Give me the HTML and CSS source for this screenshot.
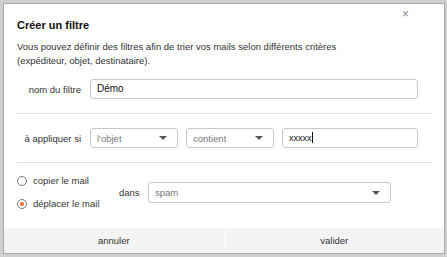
FILE: index.html
```html
<!DOCTYPE html>
<html lang="fr">
<head>
    <meta charset="UTF-8">
    <meta name="viewport" content="width=device-width, initial-scale=1.0">
    <title>Créer un filtre</title>
    <link rel="stylesheet" href="styles.css">
</head>
<body>
    <div class="dialog">
        <span class="close">&times;</span>
        <div class="content">
            <h2>Créer un filtre</h2>
            <p class="intro">Vous pouvez définir des filtres afin de trier vos mails selon différents critères<br>(expéditeur, objet, destinataire).</p>

            <div class="row">
                <label class="label">nom du filtre</label>
                <div class="field wide">Démo</div>
            </div>
            <div class="sep"></div>
            <div class="row">
                <label class="label">à appliquer si</label>
                <div class="select small"><span>l'objet</span><i class="caret"></i></div>
                <div class="select small"><span>contient</span><i class="caret"></i></div>
                <div class="field value">xxxxx<span class="cursor"></span></div>
            </div>
            <div class="sep"></div>
            <div class="action">
                <div class="radios">
                    <div class="radio"><span class="dot"></span>copier le mail</div>
                    <div class="radio"><span class="dot checked"></span>déplacer le mail</div>
                </div>
                <span class="dans">dans</span>
                <div class="select folder"><span>spam</span><i class="caret"></i></div>
            </div>
        </div>
        <div class="footer">
            <button class="btn">annuler</button>
            <button class="btn">valider</button>
        </div>
    </div>
</body>
</html>
```

FILE: styles.css
```css
* { margin: 0; padding: 0; box-sizing: border-box; }
body { font-family: "Liberation Sans", Arial, sans-serif; background: #cfcfcf; width: 447px; height: 257px; padding: 3px 2px 3px 3px; color: #333; font-size: 9.5px; }
.dialog { position: relative; width: 442px; height: 251px; background: white; border: 1px solid #a9a9a9; display: flex; flex-direction: column; }
.close { position: absolute; top: 3px; right: 35px; color: #8a8a8a; font-size: 12px; }
.content { flex: 1; padding: 14px 12px 0 13px; }
h2 { font-size: 11px; font-weight: bold; color: #111; line-height: 14px; }
.intro { margin-top: 8px; line-height: 14px; }
.row { display: flex; align-items: center; gap: 8px; margin-top: 11px; padding-right: 14px; }
.sep + .row { margin-top: 14px; }
.label { width: 64px; margin-right: 1px; text-align: right; }
.field { height: 20px; border: 1px solid #c8c8c8; border-radius: 3px; padding: 0 6px; line-height: 18px; color: #111; font-size: 10px; }
.wide { flex: 1; }
.value { flex: 1; font-size: 9px; }
.cursor { display: inline-block; width: 1px; height: 11px; background: #111; vertical-align: -2px; }
.select { height: 20px; border: 1px solid #c8c8c8; border-radius: 3px; padding: 0 6px; display: flex; align-items: center; justify-content: space-between; color: #777; }
.small { width: 88px; }
.caret { width: 0; height: 0; border-left: 4px solid transparent; border-right: 4px solid transparent; border-top: 4px solid #555; margin-right: 4px; }
.sep { height: 1px; background: #e2e2e2; margin-top: 14px; }
.action { display: flex; align-items: center; margin-top: 11px; }
.radios { display: flex; flex-direction: column; gap: 9px; width: 102px; }
.radio { display: flex; align-items: center; gap: 6px; line-height: 14px; }
.dot { width: 10px; height: 10px; border: 1px solid #777; border-radius: 50%; display: flex; align-items: center; justify-content: center; }
.checked::after { content: ""; width: 4px; height: 4px; border-radius: 50%; background: #ee6a21; }
.dans { width: 29px; }
.folder { width: 243px; height: 21px; }
.footer { display: flex; height: 25px; background: #f4f4f4; }
.btn { flex: 1; border: none; background: #f4f4f4; font-family: inherit; font-size: 9.5px; color: #333; }
.btn + .btn { border-left: 1px solid #fbfbfb; }
```
